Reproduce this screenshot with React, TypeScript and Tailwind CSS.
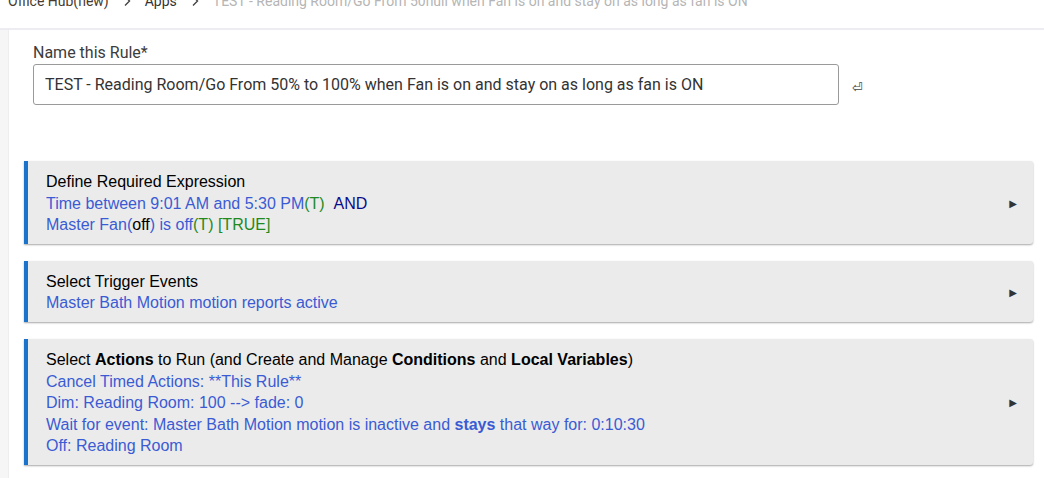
import { ReactNode } from "react";

const blue = "text-[#3a5bd4]";
const green = "text-[#1f8a1f]";

function Chevron() {
  return (
    <svg width="10" height="12" viewBox="0 0 10 12" className="shrink-0">
      <path d="M3 1.5 L7.5 6 L3 10.5" fill="none" stroke="#444" strokeWidth="1.4" />
    </svg>
  );
}

function RuleCard({ title, children }: { title: ReactNode; children: ReactNode }) {
  return (
    <div className="flex items-center bg-[#ebebeb] border-l-4 border-[#1b74c9] rounded-r-[3px] shadow-[0_1px_2px_rgba(0,0,0,0.35)] pl-[18px] pr-4 pt-[10px] pb-[8px]">
      <div className="flex-1 text-[16px] leading-[21.6px] font-['Liberation_Sans',Arial,sans-serif] text-black">
        <div>{title}</div>
        {children}
      </div>
      <span className="text-[10px] text-[#333] font-['DejaVu_Sans',sans-serif]">▶</span>
    </div>
  );
}

export default function App() {
  return (
    <div className="w-[1044px] h-[478px] overflow-hidden bg-white font-['Roboto',sans-serif]">
      <div className="h-[30px] border-b-2 border-[#ececf1] overflow-hidden">
        <div className="flex items-center pl-[8px] -mt-[9px] text-[14px] leading-[20px]">
          <span className="text-[#4a3a2e]">Office Hub(new)</span>
          <span className="mx-[13px]"><Chevron /></span>
          <span className="text-[#333]">Apps</span>
          <span className="mx-[13px]"><Chevron /></span>
          <span className="text-[#b5b5b5]">TEST - Reading Room/Go From 50null when Fan is on and stay on as long as fan is ON</span>
        </div>
      </div>
      <div className="flex h-[448px]">
        <div className="w-[9px] bg-[#f6f6f6] border-r border-[#eeeeee]" />
        <div className="flex-1 pr-[11px]">
          <div className="pl-[24px] pt-[13px]">
            <div className="text-[16px] leading-[20px] text-[#3c3c3c]">Name this Rule*</div>
            <div className="flex items-center mt-[1px]">
              <div className="w-[806px] h-[41px] border border-[#9a9a9a] rounded-[3px] flex items-center px-[11px] text-[16px] text-[#333]">
                TEST - Reading Room/Go From 50% to 100% when Fan is on and stay on as long as fan is ON
              </div>
              <span className="ml-[13px] mt-[7px] text-[13px] text-[#444] font-['DejaVu_Sans',sans-serif]">⏎</span>
            </div>
          </div>
          <div className="pl-[15px] mt-[56px] flex flex-col gap-[17px]">
            <RuleCard title="Define Required Expression">
              <div className={blue}>
                Time between 9:01 AM and 5:30 PM<span className={green}>(T)</span>{"  "}
                <span className="text-[#0b0b8a]">&nbsp;AND</span>
              </div>
              <div className={blue}>
                Master Fan(<span className="text-black">off</span>) is off<span className={green}>(T) [TRUE]</span>
              </div>
            </RuleCard>
            <RuleCard title="Select Trigger Events">
              <div className={blue}>Master Bath Motion motion reports active</div>
            </RuleCard>
            <RuleCard
              title={
                <>
                  Select <b>Actions</b> to Run (and Create and Manage <b>Conditions</b> and <b>Local Variables</b>)
                </>
              }
            >
              <div className={blue}>Cancel Timed Actions: **This Rule**</div>
              <div className={blue}>Dim: Reading Room: 100 --&gt; fade: 0</div>
              <div className={blue}>
                Wait for event: Master Bath Motion motion is inactive and <b>stays</b> that way for: 0:10:30
              </div>
              <div className={blue}>Off: Reading Room</div>
            </RuleCard>
          </div>
        </div>
      </div>
    </div>
  );
}
